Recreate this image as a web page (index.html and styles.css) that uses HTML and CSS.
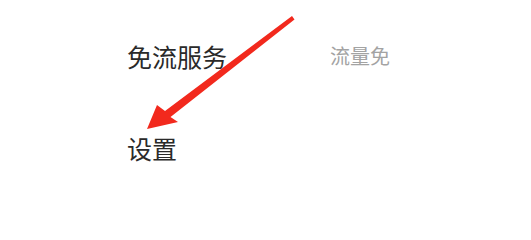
FILE: index.html
```html
<!DOCTYPE html>
<html lang="zh">
<head>
<meta charset="utf-8">
<link rel="stylesheet" href="styles.css">
</head>
<body>
<div class="page">
  <div class="row row-first">
    <span class="label">免流服务</span>
    <span class="value">流量免</span>
  </div>
  <div class="row row-second">
    <span class="label">设置</span>
  </div>
  <svg class="arrow" width="531" height="200" viewBox="0 0 531 200">
    <polygon points="147,129 157,105 165,111 292,16 294.5,19.5 170.5,117 178,122" fill="#f2291d"/>
  </svg>
</div>
</body>
</html>
```
FILE: styles.css
```css
html, body {
  margin: 0;
  padding: 0;
  background: #ffffff;
}
.page {
  position: relative;
  width: 531px;
  height: 200px;
  overflow: hidden;
  font-family: "Noto Sans CJK SC", "Noto Sans", sans-serif;
}
.row {
  display: flex;
  align-items: center;
  padding-left: 127px;
}
.row-first {
  padding-top: 43px;
  height: 26px;
}
.row-second {
  padding-top: 66px;
  height: 26px;
}
.label {
  font-size: 25px;
  line-height: 26px;
  color: #2a2a2a;
  width: 203px;
}
.value {
  font-size: 20px;
  line-height: 26px;
  color: #a3a3a3;
}
.arrow {
  position: absolute;
  left: 0;
  top: 0;
}
```
